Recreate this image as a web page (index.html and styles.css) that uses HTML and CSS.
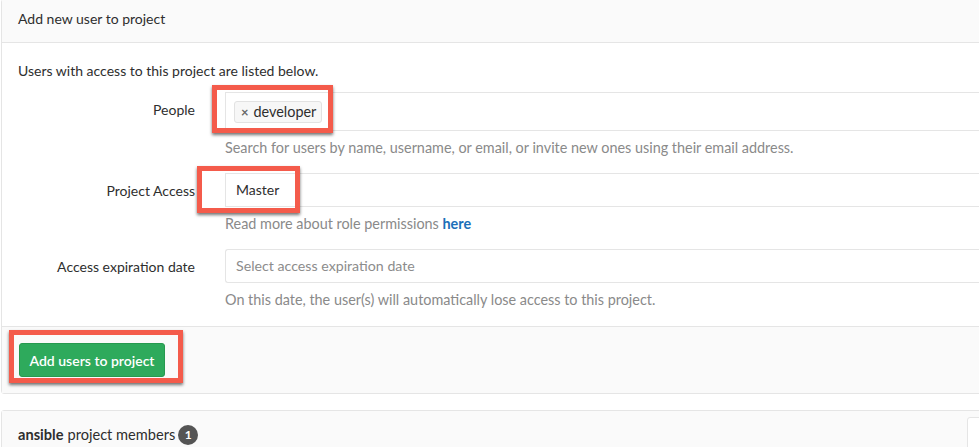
FILE: index.html
```html
<!DOCTYPE html>
<html>
<head>
<meta charset="utf-8">
<link rel="stylesheet" href="styles.css">
</head>
<body>
<div class="panel first">
  <div class="panel-heading">Add new user to project</div>
  <div class="panel-body">
    <p class="intro">Users with access to this project are listed below.</p>
    <div class="row">
      <label class="label">People</label>
      <div class="field">
        <div class="input tall"><span class="token"><span class="x">×</span>developer</span></div>
        <div class="help">Search for users by name, username, or email, or invite new ones using their email address.</div>
      </div>
    </div>
    <div class="row">
      <label class="label">Project Access</label>
      <div class="field">
        <div class="input"><span class="value">Master</span></div>
        <div class="help">Read more about role permissions <a class="link">here</a></div>
      </div>
    </div>
    <div class="row">
      <label class="label">Access expiration date</label>
      <div class="field">
        <div class="input rounded"><span class="placeholder">Select access expiration date</span></div>
        <div class="help">On this date, the user(s) will automatically lose access to this project.</div>
      </div>
    </div>
  </div>
  <div class="panel-footer">
    <button class="btn">Add users to project</button>
  </div>
</div>
<div class="panel second">
  <div class="panel-heading members">
    <div class="title"><strong>ansible</strong> project members <span class="badge">1</span></div>
    <div class="search"></div>
  </div>
</div>
<div class="mark m1"></div>
<div class="mark m2"></div>
<div class="mark m3"></div>
</body>
</html>
```
FILE: styles.css
```css
html, body {
  margin: 0;
  padding: 0;
  background: #fff;
  overflow: hidden;
}
body {
  font-family: Lato, "Open Sans", sans-serif;
  font-size: 14px;
  line-height: 20px;
  color: #2e2e2e;
  width: 979px;
  height: 447px;
  position: relative;
}
.panel {
  margin-left: 1px;
  width: 1200px;
  border: 1px solid #e5e5e5;
  border-radius: 3px;
  box-sizing: border-box;
}
.panel.first {
  margin-top: -1px;
}
.panel.second {
  margin-top: 16px;
}
.panel-heading {
  background: #fafafa;
  border-bottom: 1px solid #e5e5e5;
  padding: 9px 16px 13px;
}
.panel-body {
  padding: 18px 16px 16px;
}
.intro {
  margin: 0 0 11px;
}
.row {
  display: grid;
  grid-template-columns: 177px 1fr;
  column-gap: 30px;
  margin-bottom: 15px;
}
.row:last-child {
  margin-bottom: 0;
}
.label {
  text-align: right;
  padding-top: 8px;
}
.input {
  height: 34px;
  box-sizing: border-box;
  border: 1px solid #e5e5e5;
  border-right: none;
  display: flex;
  align-items: center;
  padding-left: 10px;
}
.input.tall {
  height: 39px;
  padding-left: 8px;
}
.input.rounded {
  border-radius: 3px 0 0 3px;
}
.token {
  display: inline-flex;
  align-items: center;
  height: 22px;
  box-sizing: border-box;
  border: 1px solid #e2e2e2;
  background: #f7f7f7;
  border-radius: 3px;
  padding: 0 5px 0 6px;
  color: #2e2e2e;
  font-size: 14.4px;
}
.token .x {
  color: #666;
  font-weight: 700;
  font-size: 13px;
  margin-right: 5px;
}
.value {
  color: #2e2e2e;
}
.placeholder {
  color: #8c8c8c;
  font-size: 14.2px;
}
.help {
  margin-top: 7px;
  color: #8a8a8a;
  font-size: 14.4px;
}
.link {
  color: #1b6fb9;
  font-weight: 700;
}
.panel-footer {
  background: #fafafa;
  border-top: 1px solid #e5e5e5;
  padding: 16px 16px 16px;
}
.btn {
  font-family: inherit;
  font-size: 14px;
  font-weight: 600;
  color: #fff;
  background: #2eaa5c;
  border: 1px solid #27994f;
  border-radius: 3px;
  height: 34px;
  width: 146px;
  margin-left: 1px;
  padding: 0;
}
.members {
  display: flex;
  align-items: flex-start;
  padding: 6px 16px 10px;
  border-bottom: none;
}
.title {
  padding-top: 8px;
  display: flex;
  align-items: center;
  font-size: 14.6px;
}
.title strong {
  margin-right: 4px;
}
.badge {
  display: inline-flex;
  align-items: center;
  justify-content: center;
  width: 20px;
  height: 20px;
  border-radius: 50%;
  background: #555;
  color: #fff;
  font-size: 12px;
  font-weight: 700;
  margin-left: 3px;
}
.search {
  margin-left: auto;
  width: 215px;
  height: 34px;
  background: #fff;
  border: 1px solid #e5e5e5;
  border-radius: 3px;
}
.mark {
  position: absolute;
  box-sizing: border-box;
  border: 5px solid #f45b4b;
  box-shadow: 0 2px 3px rgba(0, 0, 0, 0.55);
}
.m1 { left: 212px; top: 85px; width: 121px; height: 48px; }
.m2 { left: 197px; top: 166px; width: 103px; height: 47px; }
.m3 { left: 9px; top: 330px; width: 174px; height: 53px; }
```
